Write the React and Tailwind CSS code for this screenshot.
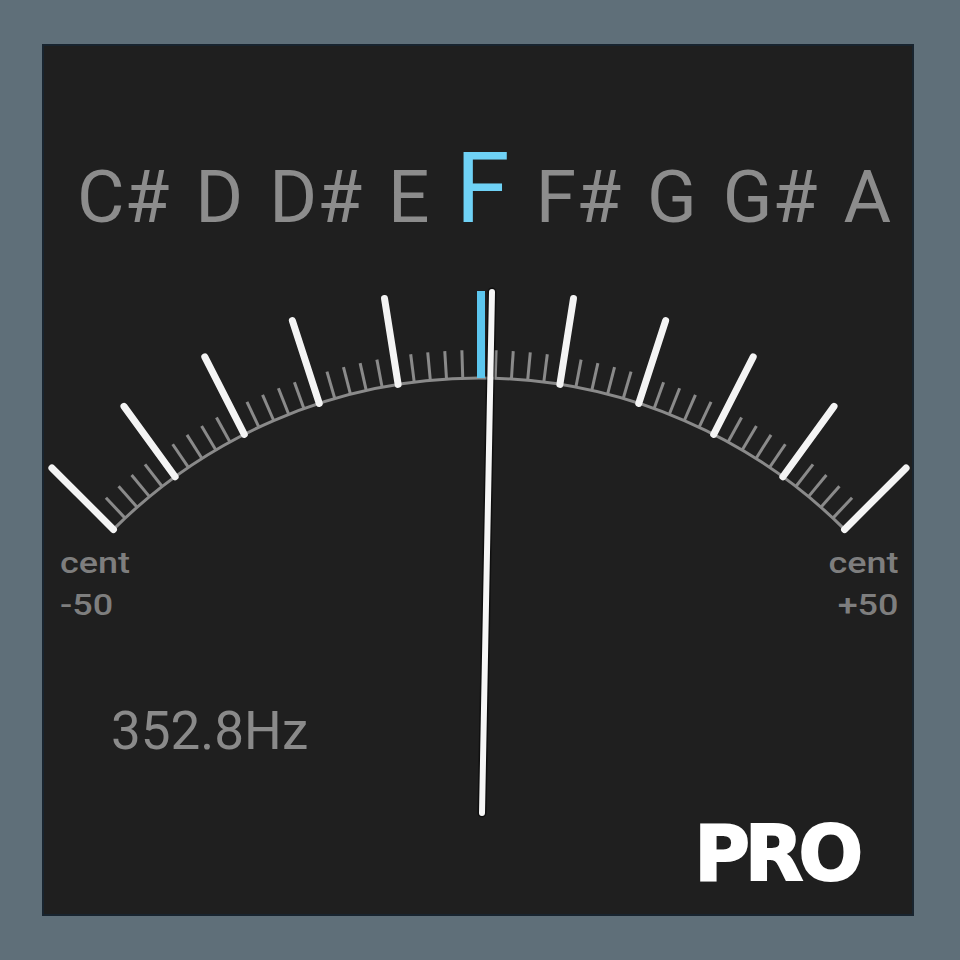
import React from "react";

const CX = 479;
const CY = 895;
const R = 517;

function pt(angleDeg, r) {
  const a = (angleDeg * Math.PI) / 180;
  return [CX + r * Math.sin(a), CY - r * Math.cos(a)];
}

function Gauge() {
  const ticks = [];
  for (let i = -25; i <= 25; i++) {
    if (i % 5 === 0) continue;
    const ang = i * 1.8;
    const [x1, y1] = pt(ang, R);
    const [x2, y2] = pt(ang, R + 28);
    ticks.push(
      <line key={"m" + i} x1={x1} y1={y1} x2={x2} y2={y2} stroke="#8a8a8a" strokeWidth="3" />
    );
  }
  const majors = [];
  for (let i = -25; i <= 25; i += 5) {
    const ang = i * 1.8;
    const [x1, y1] = pt(ang, R);
    const [x2, y2] = pt(ang, R + 87);
    majors.push(
      <line
        key={"M" + i}
        x1={i === 0 ? x1 + 2 : x1}
        y1={y1}
        x2={i === 0 ? x2 + 2 : x2}
        y2={y2}
        stroke={i === 0 ? "#5cc6ee" : "#f4f4f4"}
        strokeWidth={i === 0 ? 8 : 7}
        strokeLinecap={i === 0 ? "butt" : "round"}
      />
    );
  }
  const [ax, ay] = pt(-45, R);
  const [bx, by] = pt(45, R);
  return (
    <svg
      className="absolute inset-0 pointer-events-none"
      width="960"
      height="960"
      viewBox="0 0 960 960"
    >
      <path
        d={`M ${ax} ${ay} A ${R} ${R} 0 0 1 ${bx} ${by}`}
        fill="none"
        stroke="#8a8a8a"
        strokeWidth="3"
      />
      {ticks}
      {majors}
      <line x1="482" y1="813" x2="492" y2="292" stroke="#000" strokeOpacity="0.5" strokeWidth="9" strokeLinecap="round" />
      <line x1="482" y1="813" x2="492" y2="292" stroke="#f6f6f6" strokeWidth="6" strokeLinecap="round" />
    </svg>
  );
}

const notes = ["C#", "D", "D#", "E", "F", "F#", "G", "G#", "A"];

export default function App() {
  return (
    <div
      className="relative w-[960px] h-[960px] bg-[#5f6f79] overflow-hidden"
      style={{ fontFamily: "Roboto, 'Liberation Sans', sans-serif" }}
    >
      <div className="absolute left-0 top-0 pt-[44px] pl-[42px]">
        <div className="w-[872px] h-[872px] bg-[#1f1f1f] border-2 border-[#18242f] flex flex-col">
          <div className="mt-[94px] pl-[12px] flex items-baseline justify-center gap-[26px] leading-none text-[#8c8c8c] text-[73px]">
            {notes.map((n) =>
              n === "F" ? (
                <span key={n} className="text-[98px] text-[#6fd2f6]">
                  {n}
                </span>
              ) : (
                <span key={n}>{n}</span>
              )
            )}
          </div>
          <div className="mt-[304px] flex justify-between pl-[16px] pr-[14px] text-[29px] leading-[42px] font-medium text-[#7e7e7e]">
            <div className="origin-left scale-x-[1.24]">
              <div>cent</div>
              <div>-50</div>
            </div>
            <div className="text-right origin-right scale-x-[1.24]">
              <div>cent</div>
              <div>+50</div>
            </div>
          </div>
          <div className="mt-[79px] pl-[67px] text-[53px] leading-none text-[#8a8a8a]">
            352.8Hz
          </div>
          <div
            className="mt-[58px] flex justify-end pr-[54px] text-[76px] leading-none font-bold text-white tracking-[-5px] [-webkit-text-stroke:2px_white]"
            style={{ fontFamily: "'DejaVu Sans', sans-serif" }}
          >
            PRO
          </div>
        </div>
      </div>
      <Gauge />
    </div>
  );
}
